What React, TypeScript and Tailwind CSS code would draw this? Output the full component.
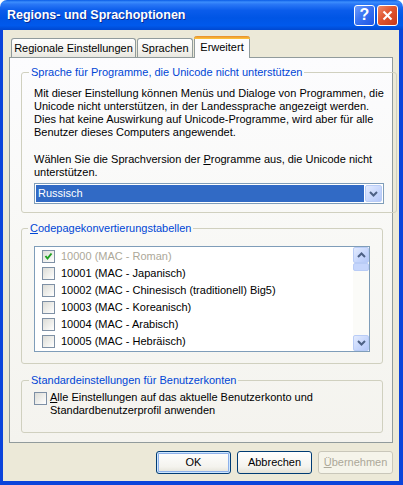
import React from "react";

function Chevron({ up = false }: { up?: boolean }) {
  return (
    <svg width="9" height="6" viewBox="0 0 9 6" className={up ? "rotate-180" : ""}>
      <polyline points="1,1 4.5,4.5 8,1" fill="none" stroke="#4D6185" strokeWidth="2" />
    </svg>
  );
}

function ScrollBtn({ up = false }: { up?: boolean }) {
  return (
    <div className="h-[16px] w-[16px] rounded-[2px] border border-[#B9CCF6] bg-[linear-gradient(135deg,#E3EBFE_0%,#C6D6FC_60%,#B5C8F8_100%)] flex items-center justify-center">
      <Chevron up={up} />
    </div>
  );
}

function Box({ checked = false }: { checked?: boolean }) {
  return (
    <div className="w-[13px] h-[13px] shrink-0 border border-[#7E90A5] bg-[linear-gradient(135deg,#DCDCD7_0%,#F1F1EE_60%,#FFFFFF_100%)] flex items-center justify-center">
      {checked && (
        <svg width="9" height="9" viewBox="0 0 9 9">
          <polyline points="1.5,4 3.5,6.5 7.5,1.5" fill="none" stroke="#21A121" strokeWidth="2" />
        </svg>
      )}
    </div>
  );
}

const rows = [
  "10000 (MAC - Roman)",
  "10001 (MAC - Japanisch)",
  "10002 (MAC - Chinesisch (traditionell) Big5)",
  "10003 (MAC - Koreanisch)",
  "10004 (MAC - Arabisch)",
  "10005 (MAC - Hebräisch)",
];

export default function App() {
  return (
    <div className="w-[403px] h-[485px] flex flex-col font-['Liberation_Sans',Arial,sans-serif] text-[11px] leading-[13px] text-black bg-white">
      {/* Title bar */}
      <div className="h-[30px] shrink-0 rounded-t-[7px] bg-[linear-gradient(to_bottom,#0A5CE6_0%,#3C8EFD_7%,#2A78F6_14%,#0A5CEB_35%,#0055E5_60%,#0059EC_85%,#0048D0_100%)] flex items-center pl-[7px] pr-[5px]">
        <span className="text-white text-[12.5px] font-bold [text-shadow:1px_1px_#0B2C93] whitespace-nowrap">
          Regions- und Sprachoptionen
        </span>
        <div className="ml-auto flex gap-[2px]">
          <div className="w-[21px] h-[21px] rounded-[3px] border border-white bg-[linear-gradient(135deg,#6F9CFB_0%,#3A73F2_45%,#1E56E4_100%)] flex items-center justify-center text-white font-bold text-[16px] leading-none">
            ?
          </div>
          <div className="w-[21px] h-[21px] rounded-[3px] border border-white bg-[linear-gradient(135deg,#EE8A6A_0%,#E0552F_45%,#C7391A_100%)] flex items-center justify-center">
            <svg width="11" height="11" viewBox="0 0 11 11">
              <line x1="1.5" y1="1.5" x2="9.5" y2="9.5" stroke="white" strokeWidth="2.2" />
              <line x1="9.5" y1="1.5" x2="1.5" y2="9.5" stroke="white" strokeWidth="2.2" />
            </svg>
          </div>
        </div>
      </div>

      {/* Body */}
      <div className="flex-1 flex flex-col bg-[#ECE9D8] border-l-[3px] border-r-[4px] border-b-[4px] border-[#0B44DB] px-[6px] pt-[6px]">
        {/* Tabs */}
        <div className="h-[21px] flex items-end gap-[1px] pl-[2px] relative z-10">
          <div className="w-[125px] h-[19px] border border-b-0 border-[#919B9C] rounded-t-[3px] bg-[linear-gradient(to_bottom,#FFFFFF_0%,#F5F4F0_60%,#E8E7E0_100%)] flex items-center justify-center whitespace-nowrap">
            Regionale Einstellungen
          </div>
          <div className="w-[56px] h-[19px] border border-b-0 border-[#919B9C] rounded-t-[3px] bg-[linear-gradient(to_bottom,#FFFFFF_0%,#F5F4F0_60%,#E8E7E0_100%)] flex items-center justify-center whitespace-nowrap">
            Sprachen
          </div>
          <div className="w-[56px] h-[22px] -mb-[1px] border border-t-0 border-b-0 border-[#919B9C] rounded-t-[3px] bg-[#FCFCFE] flex flex-col">
            <div className="h-[3px] -mx-[1px] rounded-t-[3px] bg-[linear-gradient(to_bottom,#E68B2C_0%,#FFC73C_100%)]" />
            <div className="flex-1 flex items-center justify-center pb-[3px] whitespace-nowrap">Erweitert</div>
          </div>
        </div>

        {/* Panel */}
        <div className="h-[386px] border border-[#919B9C] bg-[linear-gradient(to_bottom,#FCFCFE_0%,#F8F8F5_50%,#F4F3EE_100%)] pl-[11px] pr-[9px] pt-[8px] flex flex-col">
          {/* Group 1 */}
          <fieldset className="border border-[#D0D0BF] rounded-[3px]">
            <legend className="ml-[7px] px-[2px] text-[#0046D5] whitespace-nowrap">
              Sprache für Programme, die Unicode nicht unterstützen
            </legend>
            <div className="px-[12px] pt-[8px] pb-[8px] flex flex-col">
              <p className="whitespace-nowrap">
                Mit dieser Einstellung können Menüs und Dialoge von Programmen, die
                <br />
                Unicode nicht unterstützen, in der Landessprache angezeigt werden.
                <br />
                Dies hat keine Auswirkung auf Unicode-Programme, wird aber für alle
                <br />
                Benutzer dieses Computers angewendet.
              </p>
              <p className="mt-[14px] whitespace-nowrap">
                Wählen Sie die Sprachversion der <span className="underline underline-offset-[1px]">P</span>rogramme aus, die Unicode nicht
                <br />
                unterstützen.
              </p>
              <div className="mt-[4px] h-[21px] border border-[#7F9DB9] bg-white p-[1px] flex">
                <div className="flex-1 bg-[#316AC5] text-white flex items-center pl-[2px] mr-[1px]">Russisch</div>
                <div className="w-[17px] rounded-[2px] border border-[#B9CCF6] bg-[linear-gradient(135deg,#E3EBFE_0%,#C6D6FC_60%,#B5C8F8_100%)] flex items-center justify-center">
                  <Chevron />
                </div>
              </div>
            </div>
          </fieldset>

          {/* Group 2 */}
          <fieldset className="mt-[9px] border border-[#D0D0BF] rounded-[3px]">
            <legend className="ml-[6px] px-[2px] text-[#0046D5] whitespace-nowrap">
              <span className="underline underline-offset-[1px]">C</span>odepagekonvertierungstabellen
            </legend>
            <div className="px-[12px] pt-[11px] pb-[11px]">
              <div className="h-[106px] border border-[#7F9DB9] bg-white flex">
                <div className="flex-1 pt-[1px] flex flex-col">
                  {rows.map((r, i) => (
                    <div key={r} className="h-[17px] flex items-center pl-[7px] gap-[6px] whitespace-nowrap">
                      <Box checked={i === 0} />
                      <span className={i === 0 ? "text-[#ACA899]" : ""}>{r}</span>
                    </div>
                  ))}
                </div>
                <div className="w-[16px] bg-[#FBFBF8] flex flex-col">
                  <ScrollBtn up />
                  <div className="mt-[0px] h-[8px] rounded-[2px] border border-[#B9CCF6] bg-[#C6D6FC]" />
                  <div className="flex-1" />
                  <ScrollBtn />
                </div>
              </div>
            </div>
          </fieldset>

          {/* Group 3 */}
          <fieldset className="mt-[10px] border border-[#D0D0BF] rounded-[3px]">
            <legend className="ml-[7px] px-[2px] text-[#0046D5] whitespace-nowrap">
              Standardeinstellungen für Benutzerkonten
            </legend>
            <div className="pl-[12px] pt-[4px] pb-[15px] flex gap-[3px]">
              <div className="mt-[1px]">
                <Box />
              </div>
              <p className="whitespace-nowrap">
                <span className="underline underline-offset-[1px]">A</span>lle Einstellungen auf das aktuelle Benutzerkonto und
                <br />
                Standardbenutzerprofil anwenden
              </p>
            </div>
          </fieldset>
        </div>

        {/* Buttons */}
        <div className="mt-[8px] flex justify-end gap-[6px]">
          <div className="w-[75px] h-[23px] rounded-[3px] border border-[#003C74] bg-[linear-gradient(to_bottom,#FFFFFF_0%,#F4F3EE_70%,#E3E1D6_100%)] shadow-[inset_0_0_0_1px_#CEE7FF,inset_0_0_0_2px_#8EB1EA] flex items-center justify-center">
            OK
          </div>
          <div className="w-[75px] h-[23px] rounded-[3px] border border-[#003C74] bg-[linear-gradient(to_bottom,#FFFFFF_0%,#F4F3EE_70%,#E3E1D6_100%)] flex items-center justify-center">
            Abbrechen
          </div>
          <div className="w-[75px] h-[23px] rounded-[3px] border border-[#C9C7BA] bg-[#F5F4EA] text-[#ACA899] flex items-center justify-center">
            <span className="underline underline-offset-[1px]">Ü</span>bernehmen
          </div>
        </div>
      </div>
    </div>
  );
}
